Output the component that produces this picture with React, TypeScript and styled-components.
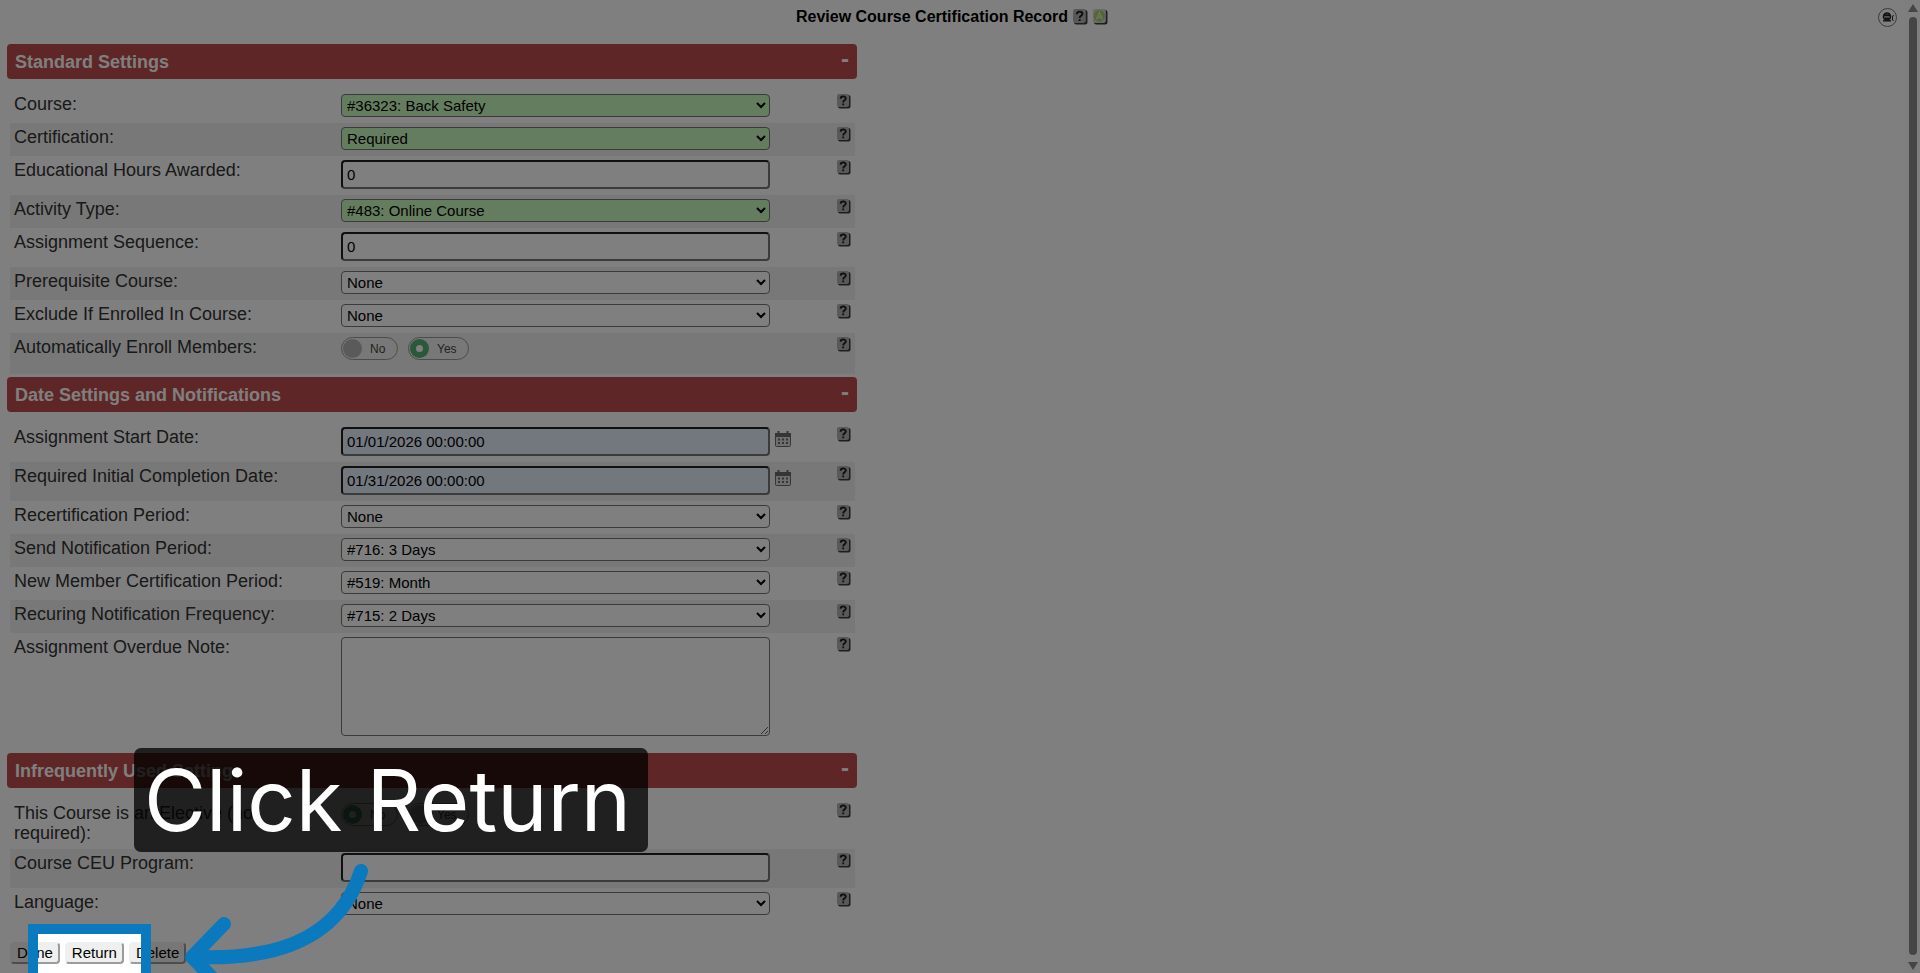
import React, { ReactNode, useId } from 'react';
import styled, { createGlobalStyle } from 'styled-components';

const GlobalStyle = createGlobalStyle`
  * { box-sizing: border-box; }
  html, body, #root { height: 100%; }
  body {
    margin: 0;
    overflow: hidden;
    background: #fff;
    font-family: Arial, "Liberation Sans", sans-serif;
    color: #000;
  }
`;

const Shell = styled.div`
  display: flex;
  height: 100vh;
  overflow: hidden;
`;

const Page = styled.main`
  flex: 1;
  min-width: 0;
  padding: 0 8px 0 7px;
`;

const TopBar = styled.header`
  display: grid;
  grid-template-columns: 1fr auto 1fr;
  align-items: center;
  height: 34px;
  margin-bottom: 10px;
`;

const TitleGroup = styled.div`
  grid-column: 2;
  display: flex;
  align-items: center;
  gap: 5px;
`;

const Title = styled.h1`
  margin: 0;
  font-size: 16px;
  line-height: 20px;
`;

const RoundButton = styled.button`
  justify-self: end;
  display: grid;
  place-items: center;
  width: 19px;
  height: 19px;
  padding: 0;
  border: 1px solid #777;
  border-radius: 50%;
  background: #fff;
`;

const IconButton = styled.button<{ $size?: number }>`
  display: block;
  flex: none;
  width: ${(p) => p.$size ?? 14}px;
  padding: 0;
  border: 0;
  background: none;
  svg {
    display: block;
    width: 100%;
    height: auto;
  }
`;

const Form = styled.form`
  width: 850px;
  max-width: 100%;
`;

const Section = styled.section`
  margin-bottom: 3px;
`;

const SectionHead = styled.div`
  display: flex;
  align-items: center;
  justify-content: space-between;
  height: 35px;
  margin-bottom: 11px;
  padding: 0 8px;
  border-radius: 4px;
  background: #bc4c4c;
  color: #fff;
`;

const SectionTitle = styled.h2`
  margin: 0;
  font-size: 18px;
  line-height: 20px;
`;

const Collapse = styled.button`
  padding: 0 0 5px;
  border: 0;
  background: none;
  color: #fff;
  font: bold 24px/20px Arial, "Liberation Sans", sans-serif;
`;

const Row = styled.div<{ $striped?: boolean; $tall?: boolean }>`
  display: grid;
  grid-template-columns: 331px 1fr 18px;
  align-items: start;
  margin: 0 2px 0 3px;
  padding-top: 4px;
  padding-bottom: ${(p) => (p.$tall ? 14 : 6)}px;
  background: ${(p) => (p.$striped ? '#f0f0f0' : 'transparent')};
`;

const labelText = `
  padding: 0 40px 0 4px;
  font-size: 18px;
  line-height: 20px;
  color: #333;
`;
const Label = styled.label`${labelText}`;
const GroupLabel = styled.span`${labelText}`;

const Control = styled.div`
  display: flex;
  align-items: flex-start;
  gap: 5px;
`;

const CalendarButton = styled(IconButton)`
  padding-top: 4px;
`;

const fieldBase = `
  width: 429px;
  margin: 0;
  font-family: Arial, "Liberation Sans", sans-serif;
  font-size: 15px;
  color: #000;
  border-radius: 4px;
`;

const Select = styled.select<{ $filled?: boolean }>`
  ${fieldBase}
  height: 23px;
  padding: 0 1px;
  border: 1px solid #767676;
  background-color: ${(p) => (p.$filled ? '#c9fbbd' : '#fff')};
`;

const TextBox = styled.input<{ $auto?: boolean }>`
  ${fieldBase}
  height: 29px;
  padding: 0 4px;
  border: 2px inset #767676;
  background: ${(p) => (p.$auto ? '#e6eefd' : '#fff')};
`;

const TextArea = styled.textarea`
  ${fieldBase}
  height: 99px;
  border: 1px solid #767676;
  background: #fff;
`;

const Choices = styled.div`
  display: flex;
  gap: 10px;
`;

const Choice = styled.label<{ $wide?: boolean }>`
  display: flex;
  align-items: center;
  gap: 8px;
  width: ${(p) => (p.$wide ? 61 : 57)}px;
  height: 23px;
  padding-left: 1px;
  border: 1px solid #999;
  border-radius: 12px;
  font-size: 12px;
  color: #444;
`;

const Radio = styled.input`
  appearance: none;
  width: 19px;
  height: 19px;
  margin: 0;
  border-radius: 50%;
  background: #b4b4b4;
  &:checked {
    border: 6px solid #55b073;
    background: #fff;
  }
`;

const Actions = styled.div`
  display: flex;
  gap: 5px;
  padding: 18px 2px 0 3px;
`;

const ActionButton = styled.button`
  height: 22px;
  padding: 0 5px;
  border: 2px outset #efefef;
  border-radius: 4px;
  background: #efefef;
  color: #000;
  font: 15px/18px Arial, "Liberation Sans", sans-serif;
`;

const Scrollbar = styled.div`
  display: flex;
  flex-direction: column;
  align-items: center;
  justify-content: space-between;
  gap: 5px;
  width: 15px;
  padding: 4px 0 3px;
  background: #fcfcfc;
`;

const Thumb = styled.div`
  flex: 1;
  width: 8px;
  margin-bottom: 2px;
  border-radius: 4px;
  background: #8b8b8b;
`;

const Spotlight = styled.div`
  position: fixed;
  left: 38px;
  top: 934px;
  width: 103px;
  height: 60px;
  outline: 10px solid #0a79bd;
  box-shadow: 0 0 0 4000px rgba(0, 0, 0, 0.5);
  pointer-events: none;
`;

const Callout = styled.div`
  position: fixed;
  left: 134px;
  top: 748px;
  height: 104px;
  padding: 0 17px 0 10px;
  border-radius: 7px;
  background: rgba(0, 0, 0, 0.75);
  color: #fff;
  font: 400 85px/106px Inter, sans-serif;
  white-space: nowrap;
`;

const Arrow = styled.svg`
  position: fixed;
  left: 180px;
  top: 860px;
  pointer-events: none;
`;

function KeyCap({ children, fill = '#b2b2b2' }: { children: ReactNode; fill?: string }) {
  return (
    <svg viewBox="0 0 14 15" aria-hidden="true">
      <rect x="1" y="1" width="12.5" height="13.5" rx="2" fill="#3c3c3c" />
      <rect x="0" y="0" width="12" height="13" rx="2" fill={fill} />
      {children}
    </svg>
  );
}

function Help({ size }: { size?: number }) {
  return (
    <IconButton type="button" aria-label="Help" $size={size}>
      <KeyCap>
        <path d="M3.6 4.8C3.6 1.7 8.8 1.7 8.8 4.5C8.8 6.4 6.2 6.2 6.2 8.4M6.2 9.5V11.3" fill="none" stroke="#1c1c1c" strokeWidth="1.8" />
      </KeyCap>
    </IconButton>
  );
}

function Calendar() {
  return (
    <CalendarButton type="button" aria-label="Choose date" $size={16}>
      <svg viewBox="0 0 16 16" aria-hidden="true">
        <rect x="0.5" y="2.5" width="15" height="13" rx="1" fill="#ddd" stroke="#6a6a6a" />
        <path d="M0 2h16v4H0z" fill="#6a6a6a" />
        <path d="M3.5 0v4M12.5 0v4" stroke="#6a6a6a" strokeWidth="2" />
        <path d="M3 8.5h10M3 12h10" stroke="#6a6a6a" strokeWidth="2" strokeDasharray="2 2" />
      </svg>
    </CalendarButton>
  );
}

interface FieldProps {
  label: string;
  value?: string;
  striped?: boolean;
}

function SelectField({ label, value = 'None', striped, filled }: FieldProps & { filled?: boolean }) {
  const id = useId();
  return (
    <Row $striped={striped}>
      <Label htmlFor={id}>{label}</Label>
      <Control>
        <Select id={id} $filled={filled}>
          <option>{value}</option>
        </Select>
      </Control>
      <Help />
    </Row>
  );
}

function TextField({ label, value = '', striped, date }: FieldProps & { date?: boolean }) {
  const id = useId();
  return (
    <Row $striped={striped}>
      <Label htmlFor={id}>{label}</Label>
      <Control>
        <TextBox id={id} defaultValue={value} $auto={date} />
        {date && <Calendar />}
      </Control>
      <Help />
    </Row>
  );
}

function ToggleField({ label, value, striped, tall }: FieldProps & { tall?: boolean }) {
  const id = useId();
  return (
    <Row $striped={striped} $tall={tall} role="radiogroup" aria-labelledby={id}>
      <GroupLabel id={id}>{label}</GroupLabel>
      <Choices>
        {['No', 'Yes'].map((option) => (
          <Choice key={option} $wide={option === 'Yes'}>
            <Radio type="radio" name={id} defaultChecked={option === value} />
            {option}
          </Choice>
        ))}
      </Choices>
      <Help />
    </Row>
  );
}

function NoteField({ label }: FieldProps) {
  const id = useId();
  return (
    <Row $tall>
      <Label htmlFor={id}>{label}</Label>
      <Control>
        <TextArea id={id} />
      </Control>
      <Help />
    </Row>
  );
}

function Group({ title, children }: { title: string; children: ReactNode }) {
  return (
    <Section>
      <SectionHead>
        <SectionTitle>{title}</SectionTitle>
        <Collapse type="button" aria-label={`Collapse ${title}`}>-</Collapse>
      </SectionHead>
      {children}
    </Section>
  );
}

export default function App() {
  return (
    <>
      <GlobalStyle />
      <Shell>
        <Page>
          <TopBar>
            <TitleGroup>
              <Title>Review Course Certification Record</Title>
              <Help size={15} />
              <IconButton type="button" aria-label="Accessibility" $size={15}>
                <KeyCap fill="#d4d4d4">
                  <circle cx="6" cy="6.5" r="5.3" fill="#a9cf62" />
                  <path d="M3.3 9.8L6 3.2L8.7 9.8M4.3 7.8h3.4" fill="none" stroke="#e4e4e4" strokeWidth="1.2" />
                </KeyCap>
              </IconButton>
            </TitleGroup>
            <RoundButton type="button" aria-label="Record">
              <svg width="13" height="11" viewBox="0 0 13 11" aria-hidden="true">
                <circle cx="6" cy="4.5" r="3.5" fill="#ddd" stroke="#222" strokeWidth="1.6" />
                <path d="M3 3.2h6M4 6.5h4" stroke="#222" strokeWidth="2" />
                <path d="M2 8.8h8" stroke="#222" strokeWidth="1.4" />
                <path d="M12.5 3L11.5 5v3l1 1" fill="none" stroke="#222" />
              </svg>
            </RoundButton>
          </TopBar>
          <Form onSubmit={(e) => e.preventDefault()}>
            <Group title="Standard Settings">
              <SelectField label="Course:" value="#36323: Back Safety" filled />
              <SelectField label="Certification:" value="Required" filled striped />
              <TextField label="Educational Hours Awarded:" value="0" />
              <SelectField label="Activity Type:" value="#483: Online Course" filled striped />
              <TextField label="Assignment Sequence:" value="0" />
              <SelectField label="Prerequisite Course:" striped />
              <SelectField label="Exclude If Enrolled In Course:" />
              <ToggleField label="Automatically Enroll Members:" value="Yes" striped tall />
            </Group>
            <Group title="Date Settings and Notifications">
              <TextField label="Assignment Start Date:" value="01/01/2026 00:00:00" date />
              <TextField label="Required Initial Completion Date:" value="01/31/2026 00:00:00" date striped />
              <SelectField label="Recertification Period:" />
              <SelectField label="Send Notification Period:" value="#716: 3 Days" striped />
              <SelectField label="New Member Certification Period:" value="#519: Month" />
              <SelectField label="Recuring Notification Frequency:" value="#715: 2 Days" striped />
              <NoteField label="Assignment Overdue Note:" />
            </Group>
            <Group title="Infrequently Used Settings">
              <ToggleField label="This Course is an Elective (not required):" value="No" />
              <TextField label="Course CEU Program:" striped />
              <SelectField label="Language:" />
            </Group>
            <Actions>
              <ActionButton type="button">Done</ActionButton>
              <ActionButton type="button">Return</ActionButton>
              <ActionButton type="button">Delete</ActionButton>
            </Actions>
          </Form>
        </Page>
        <Scrollbar aria-hidden="true">
          <svg width="10" height="8" viewBox="0 0 10 8"><path d="M5 0L10 8H0z" fill="#8b8b8b" /></svg>
          <Thumb />
          <svg width="10" height="8" viewBox="0 0 10 8"><path d="M0 0H10L5 8z" fill="#8b8b8b" /></svg>
        </Scrollbar>
      </Shell>
      <Spotlight />
      <Callout role="tooltip">Click Return</Callout>
      <Arrow width="200" height="140" viewBox="180 860 200 140" aria-hidden="true">
        <path d="M361 871C342 930 290 961 194 957M224 924L192 957L224 990" fill="none" stroke="#0a79bd" strokeWidth="14" strokeLinecap="round" strokeLinejoin="round" />
      </Arrow>
    </>
  );
}
